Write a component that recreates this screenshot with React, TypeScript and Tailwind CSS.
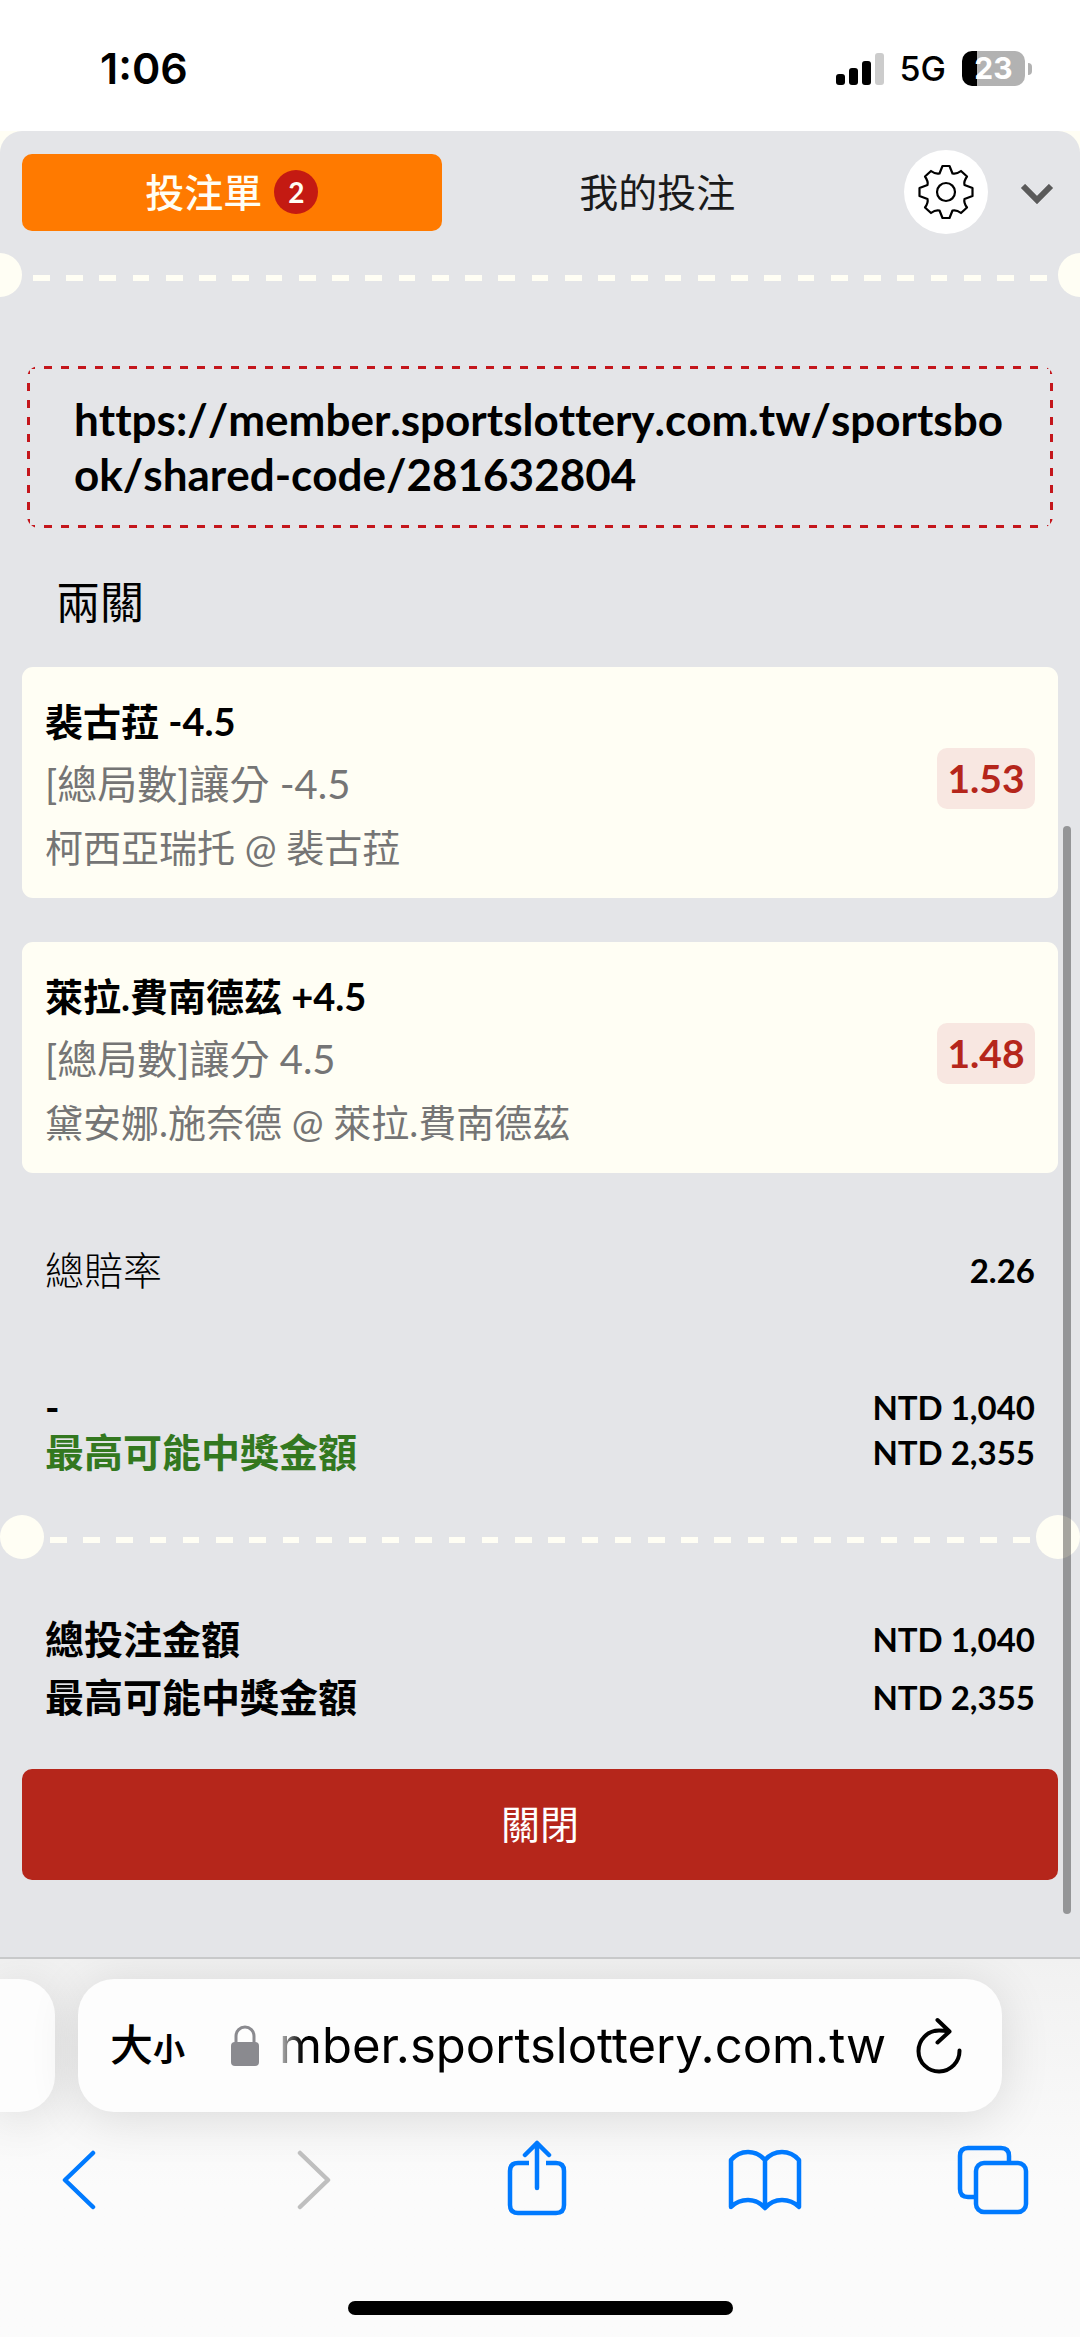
import { useState } from "react";

const bets = [
  {
    name: "裴古菈 -4.5",
    market: "[總局數]讓分 -4.5",
    match: "柯西亞瑞托 @ 裴古菈",
    odds: "1.53",
  },
  {
    name: "萊拉.費南德茲 +4.5",
    market: "[總局數]讓分 4.5",
    match: "黛安娜.施奈德 @ 萊拉.費南德茲",
    odds: "1.48",
  },
];

type Bet = (typeof bets)[number];

const StatusBar = () => {
  return (
    <header className="flex h-[131px] items-center justify-between bg-white pt-[6px] pr-12 pl-[100px] font-[Inter,sans-serif]">
      <span className="text-[43px] font-semibold">1:06</span>
      <div className="flex items-center gap-4">
        <svg width="48" height="32" viewBox="0 0 48 32" aria-hidden="true">
          <rect x="0" y="21" width="9" height="11" rx="3" />
          <rect x="13" y="15" width="9" height="17" rx="3" />
          <rect x="26" y="8" width="9" height="24" rx="3" />
          <rect x="39" y="0" width="9" height="32" rx="3" fill="#cccccc" />
        </svg>
        <span className="text-[34px] font-medium">5G</span>
        <div className="flex items-center gap-[3px]">
          <span className="flex h-[35px] w-[63px] items-center justify-center rounded-[10px] bg-linear-to-r from-black from-24% to-[#b2b2b2] to-24% text-[30px] font-bold text-white">
            23
          </span>
          <span className="h-3 w-1 rounded-r-full bg-[#b2b2b2]" />
        </div>
      </div>
    </header>
  );
};

const GearIcon = () => (
  <svg
    width="56"
    height="56"
    viewBox="0 0 56 56"
    fill="none"
    stroke="#000"
    strokeWidth="2.2"
    strokeLinejoin="round"
    aria-hidden="true"
  >
    <circle cx="28" cy="28" r="9" />
    <path d="M24.500 2h7l3 7.500q4 1 8.500-2.500l6 5.500q-3.500 5-2.500 8.500l8 3v8l-8 3q-1 3.500 2.500 8.500l-6 5.500q-4.500-3.500-8.500-2.500l-3 7.500h-7l-3-7.500q-4-1-8.500 2.500l-6-5.500q3.500-5 2.500-8.500l-8-3v-8l8-3q1-3.500-2.500-8.500l6-5.500q4.500 3.500 8.500 2.500z" />
  </svg>
);

// ticket style separator: dashed line with a notch on each side
const Separator = ({ inset = false }: { inset?: boolean }) => {
  return (
    <div
      className={`flex h-11 items-center justify-between ${inset ? "gap-[6px]" : "-mx-[22px] gap-[11px]"}`}
    >
      <span className="size-11 shrink-0 rounded-full bg-[#fffef4]" />
      <span
        className={`mt-[6px] h-[6px] flex-1 ${
          inset
            ? "bg-[repeating-linear-gradient(90deg,#fffef4_0_calc(100%/59),transparent_calc(100%/59)_calc(200%/59))]"
            : "bg-[repeating-linear-gradient(90deg,#fffef4_0_calc(100%/61),transparent_calc(100%/61)_calc(200%/61))]"
        }`}
      />
      <span className="size-11 shrink-0 rounded-full bg-[#fffef4]" />
    </div>
  );
};

const BetCard = ({ bet }: { bet: Bet }) => {
  return (
    <li className="flex items-center justify-between rounded-[11px] bg-[#fffef4] px-[23px] pt-[23px] pb-[19px]">
      <div className="text-[38px] leading-[63px] text-[#757575]">
        <h3 className="font-bold text-black">{bet.name}</h3>
        <p className="text-[40px]">{bet.market}</p>
        <p>{bet.match}</p>
      </div>
      <span className="mb-3 flex h-[61px] w-[98px] items-center justify-center rounded-[10px] bg-[#f8e7e1] text-[39px] font-bold text-[#b5261b]">
        {bet.odds}
      </span>
    </li>
  );
};

const BetSlip = () => {
  const [tab, setTab] = useState("slip");

  return (
    <main className="relative overflow-hidden rounded-t-[22px] bg-[#e4e5e8] pt-[19px] text-black">
      <nav className="flex items-center pl-[22px]">
        <div className="flex flex-1 gap-[6px]">
          <button
            onClick={() => setTab("slip")}
            aria-pressed={tab === "slip"}
            className="flex h-[77px] flex-1 items-center justify-center gap-3 rounded-[10px] bg-[#ff7a00] text-[39px] font-medium text-[#fffef4]"
          >
            投注單
            <span className="flex size-11 items-center justify-center rounded-full bg-[#c41a12] text-[28px] font-bold">
              2
            </span>
          </button>
          <button
            onClick={() => setTab("mine")}
            aria-pressed={tab === "mine"}
            className="h-[77px] flex-1 text-[39px] text-[#1a1a1a]"
          >
            我的投注
          </button>
        </div>
        <button
          aria-label="設定"
          className="ml-[37px] flex size-[84px] items-center justify-center rounded-full bg-white"
        >
          <GearIcon />
        </button>
        <button
          aria-label="收合"
          className="flex w-[92px] justify-center pt-1 pl-[6px]"
        >
          <svg
            width="34"
            height="20"
            viewBox="0 0 34 20"
            fill="none"
            stroke="#5a5a5a"
            strokeWidth="6"
            aria-hidden="true"
          >
            <path d="M3 2l14 14 14-14" />
          </svg>
        </button>
      </nav>

      <div className="mt-[19px]">
        <Separator />
      </div>

      <section className="px-[22px] pt-[69px]">
        <div className="mx-[5px] rounded-[12px] bg-[repeating-linear-gradient(90deg,#c4161c_0_8px,transparent_8px_17px),repeating-linear-gradient(90deg,#c4161c_0_8px,transparent_8px_17px),repeating-linear-gradient(#c4161c_0_8px,transparent_8px_17px),repeating-linear-gradient(#c4161c_0_8px,transparent_8px_17px)] bg-[size:100%_3px,100%_3px,3px_100%,3px_100%] bg-[position:0_0,0_100%,0_0,100%_0] bg-no-repeat px-[47px] py-[26px]">
          <p className="text-[44px] leading-[55px] font-bold break-all [font-kerning:none] [font-variant-ligatures:none]">
            https://member.sportslottery.com.tw/sportsbook/shared-code/281632804
          </p>
        </div>
        <h2 className="mt-[42px] pl-[34px] text-[44px] leading-16">兩關</h2>
        <ul className="mt-[33px] flex flex-col gap-11">
          {bets.map((bet) => (
            <BetCard key={bet.odds} bet={bet} />
          ))}
        </ul>
      </section>

      <dl className="px-[45px] pt-[75px] text-[33px] leading-[45px] font-bold">
        <div className="flex items-center justify-between">
          <dt className="text-[39px] font-light">總賠率</dt>
          <dd>2.26</dd>
        </div>
        <div className="mt-[92px] flex items-center justify-between">
          <dt className="text-[39px]">-</dt>
          <dd>NTD 1,040</dd>
        </div>
        <div className="flex items-center justify-between">
          <dt className="text-[39px] text-[#33781f]">最高可能中獎金額</dt>
          <dd>NTD 2,355</dd>
        </div>
      </dl>

      <div className="mt-[40px]">
        <Separator inset />
      </div>

      <dl className="px-[45px] pt-[51px] text-[33px] leading-[58px] font-bold">
        <div className="flex items-center justify-between">
          <dt className="text-[39px]">總投注金額</dt>
          <dd>NTD 1,040</dd>
        </div>
        <div className="flex items-center justify-between">
          <dt className="text-[39px]">最高可能中獎金額</dt>
          <dd>NTD 2,355</dd>
        </div>
      </dl>

      <div className="px-[22px] pt-[43px] pb-[77px]">
        <button className="h-[111px] w-full rounded-[10px] bg-[#b5261b] text-[39px] text-white">
          關閉
        </button>
      </div>

      {/* scroll indicator */}
      <span className="absolute right-[9px] bottom-[43px] h-[1088px] w-2 rounded-full bg-black/35" />
    </main>
  );
};

const BrowserBar = () => {
  return (
    <footer className="overflow-hidden border-t-2 border-[#c8c9ca] bg-linear-to-b from-[#f1f1f1] to-[#fbfbfb] to-60% pt-[20px] pb-[22px] font-[Inter,'Noto_Sans_CJK_TC',sans-serif]">
      <div className="flex h-[133px] gap-[23px]">
        <div className="w-[55px] shrink-0 rounded-r-[36px] bg-[#fdfdfd] shadow-[0_6px_50px_rgba(0,0,0,0.12)]" />
        <div className="mr-[78px] flex min-w-0 flex-1 items-center rounded-[36px] bg-[#fdfdfd] pr-[38px] pl-[32px] shadow-[0_6px_50px_rgba(0,0,0,0.12)]">
          <button
            aria-label="大小"
            className="flex shrink-0 items-baseline font-medium"
          >
            <span className="text-[43px]">大</span>
            <span className="text-[32px] font-bold">小</span>
          </button>
          <svg
            className="ml-[45px] shrink-0"
            width="30"
            height="42"
            viewBox="0 0 30 42"
            fill="none"
            stroke="#8a8a8f"
            strokeWidth="3"
            aria-hidden="true"
          >
            <rect x="1" y="17" width="28" height="24" rx="4" fill="#8a8a8f" stroke="none" />
            <path d="M6 19v-8a9 9 0 0 1 18 0v8" />
          </svg>
          {/* the start of the address fades out under the lock */}
          <div className="ml-3 flex flex-1 justify-end mask-l-from-95% text-[49px]">
            <span>mber.sportslottery.com.tw</span>
          </div>
          <button aria-label="重新載入" className="ml-7 shrink-0">
            <svg
              width="50"
              height="58"
              viewBox="0 0 50 58"
              fill="none"
              stroke="#000"
              strokeWidth="4"
              strokeLinecap="round"
              strokeLinejoin="round"
              aria-hidden="true"
            >
              <path d="M45.500 33.500a20.500 20.500 0 1 1-20.500-20q5 0 10 1M23.500 3l12 11.500-12 11" />
            </svg>
          </button>
        </div>
      </div>

      <nav className="mt-[27px] flex h-[82px] items-center justify-between pr-[49px] pl-[41px] text-[#007aff]">
        <button aria-label="返回" className="flex w-[76px] justify-center">
          <svg width="56" height="60" viewBox="0 0 56 60" fill="none" stroke="currentColor" strokeWidth="4.500" strokeLinecap="round" strokeLinejoin="round">
            <path d="M42 3L14 30l28 27" />
          </svg>
        </button>
        <button aria-label="前進" className="flex w-[76px] justify-center text-[#bfbfbf]">
          <svg width="56" height="60" viewBox="0 0 56 60" fill="none" stroke="currentColor" strokeWidth="4.500" strokeLinecap="round" strokeLinejoin="round">
            <path d="M20 3l28 27-28 27" />
          </svg>
        </button>
        <button aria-label="分享" className="flex w-[76px] justify-center">
          <svg width="62" height="80" viewBox="0 0 62 80" fill="none" stroke="currentColor" strokeWidth="4.500" strokeLinecap="round" strokeLinejoin="round">
            <path d="M24 23H13q-8 0-8 8v34q0 8 8 8h38q8 0 8-8V31q0-8-8-8H41" strokeLinecap="butt" />
            <path d="M32 48V3M20 15L32 3l12 12" />
          </svg>
        </button>
        <button aria-label="書籤" className="flex w-[76px] justify-center">
          <svg width="76" height="64" viewBox="0 0 76 64" fill="none" stroke="currentColor" strokeWidth="4.500" strokeLinecap="round" strokeLinejoin="round">
            <path d="M38 12Q31 4 21 4T4 12v47q7-7 17-7t17 8q7-8 17-8t17 7V12Q65 4 55 4T38 12v47" />
          </svg>
        </button>
        <button aria-label="分頁" className="flex w-[76px] justify-center">
          <svg width="72" height="70" viewBox="0 0 72 70" fill="none" stroke="currentColor" strokeWidth="4.500" strokeLinejoin="round">
            <path d="M19 52h-8q-8 0-8-8V11q0-8 8-8h33q8 0 8 8v7" />
            <rect x="19" y="18" width="50" height="49" rx="8" />
          </svg>
        </button>
      </nav>

      <div className="mx-auto mt-20 h-[14px] w-[385px] rounded-full bg-black" />
    </footer>
  );
};

export default function App() {
  return (
    <div className="bg-[#fffef4] font-[Lato,'Noto_Sans_CJK_TC',sans-serif]">
      <StatusBar />
      <BetSlip />
      <BrowserBar />
    </div>
  );
}
